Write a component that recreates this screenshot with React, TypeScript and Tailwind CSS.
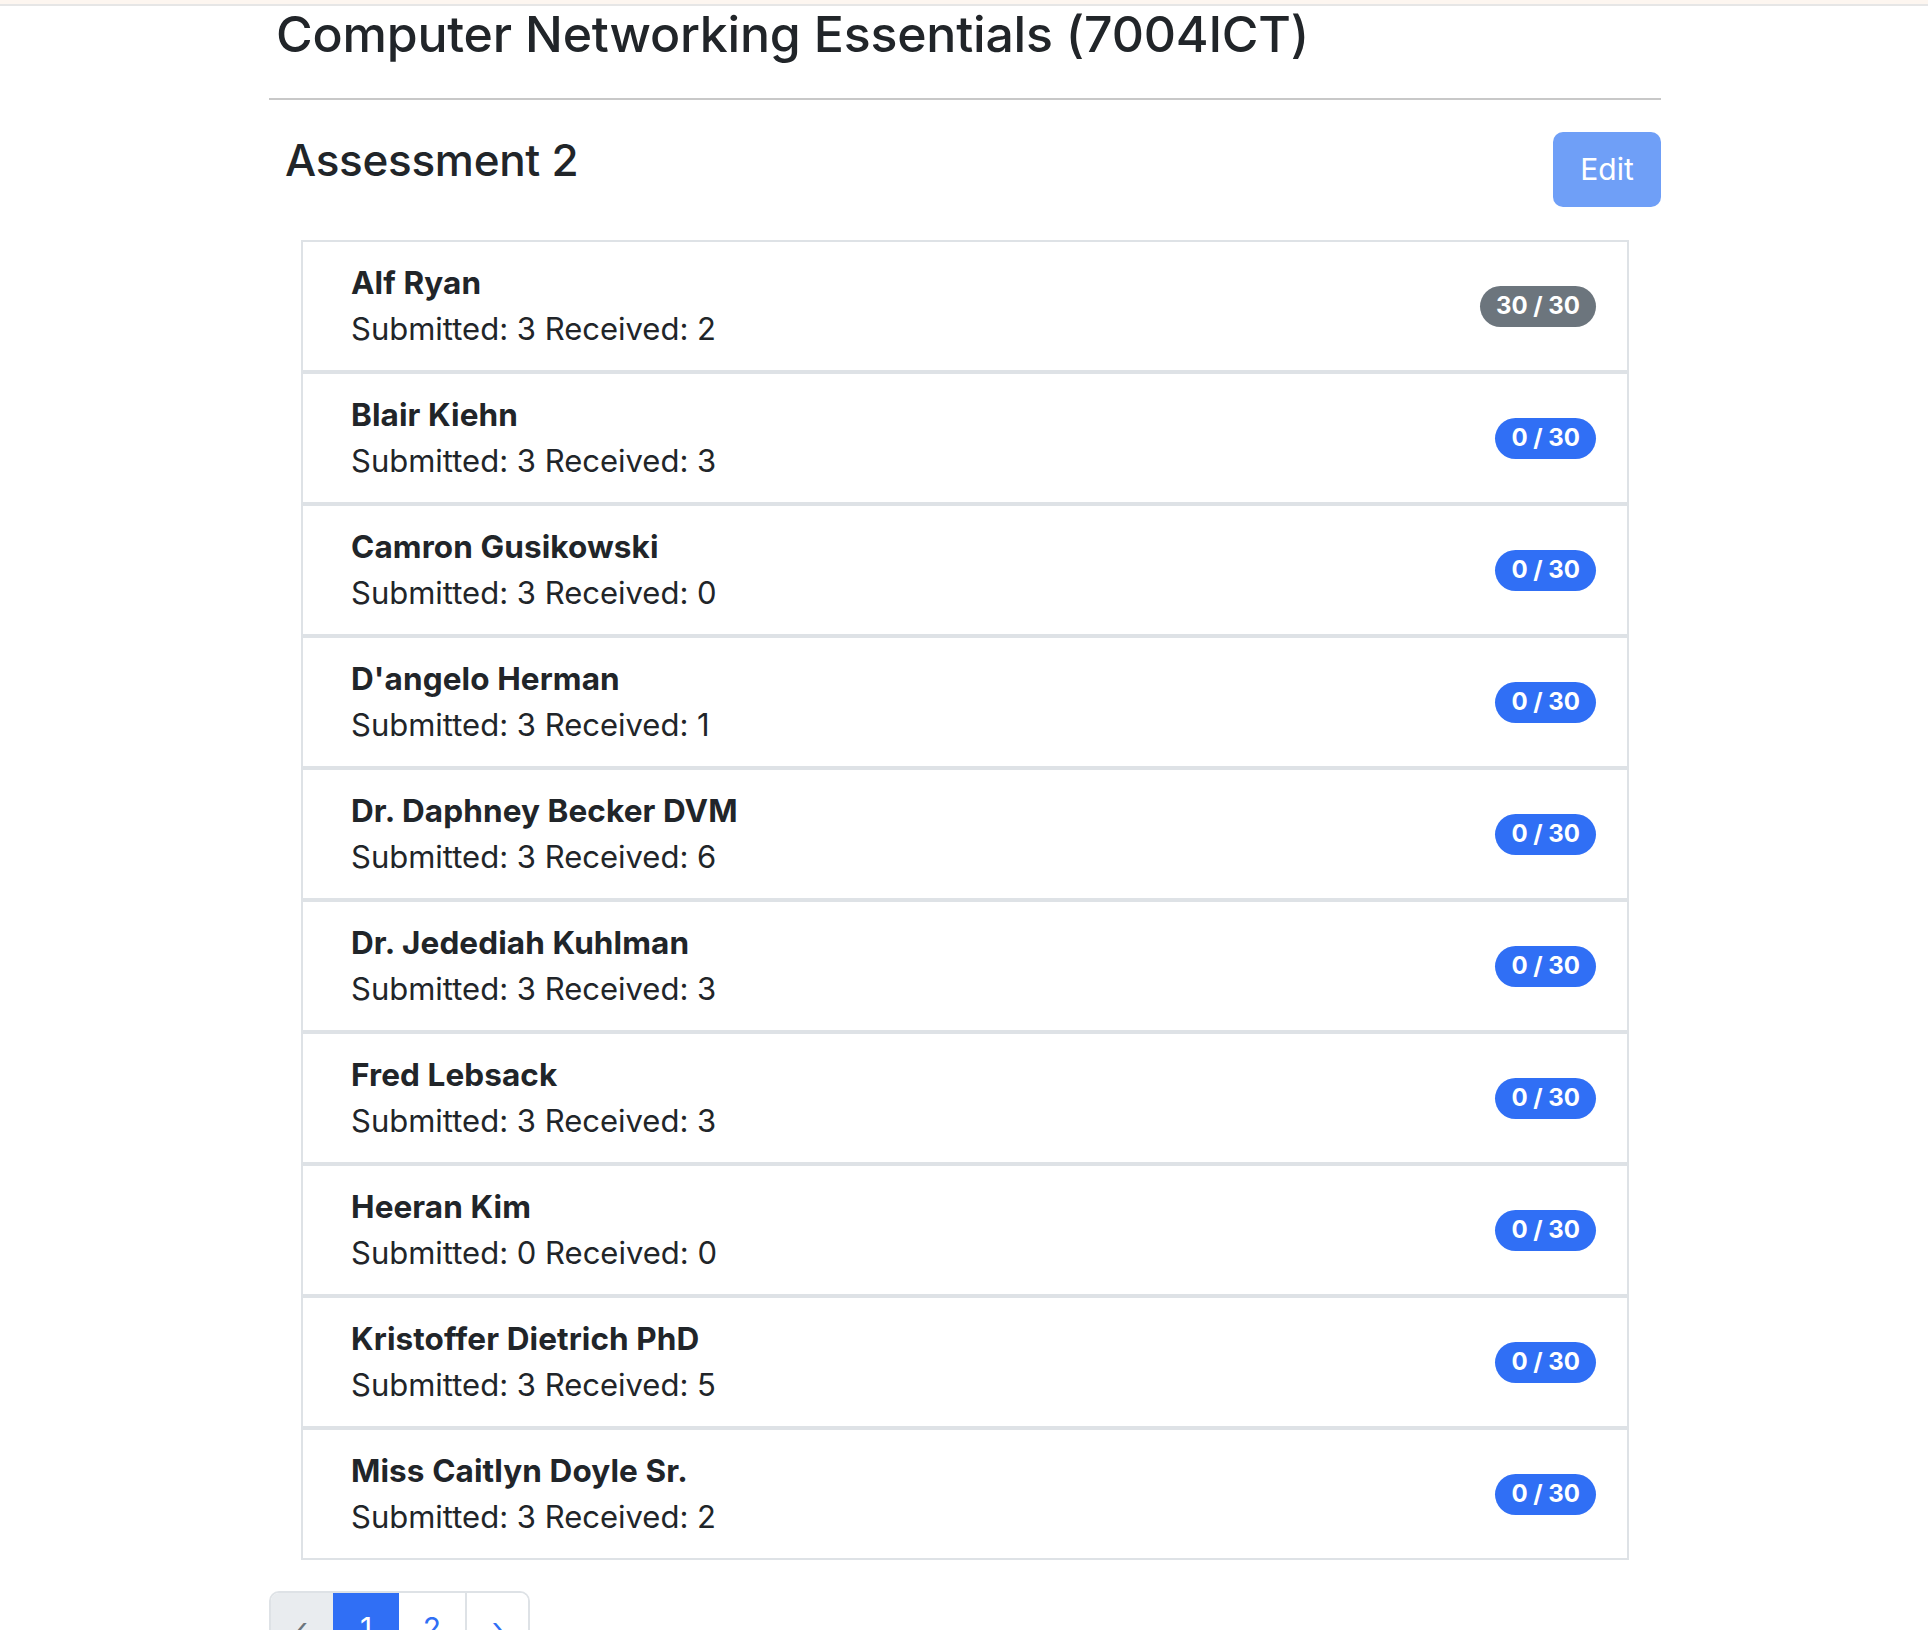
import React from 'react';

type Student = {
    name: string;
    submitted: number;
    received: number;
    score: number;
};

const STUDENTS: Student[] = [
    { name: 'Alf Ryan', submitted: 3, received: 2, score: 30 },
    { name: 'Blair Kiehn', submitted: 3, received: 3, score: 0 },
    { name: 'Camron Gusikowski', submitted: 3, received: 0, score: 0 },
    { name: "D'angelo Herman", submitted: 3, received: 1, score: 0 },
    { name: 'Dr. Daphney Becker DVM', submitted: 3, received: 6, score: 0 },
    { name: 'Dr. Jedediah Kuhlman', submitted: 3, received: 3, score: 0 },
    { name: 'Fred Lebsack', submitted: 3, received: 3, score: 0 },
    { name: 'Heeran Kim', submitted: 0, received: 0, score: 0 },
    { name: 'Kristoffer Dietrich PhD', submitted: 3, received: 5, score: 0 },
    { name: 'Miss Caitlyn Doyle Sr.', submitted: 3, received: 2, score: 0 },
];

const MAX_SCORE = 30;

const StudentRow: React.FC<{ student: Student }> = ({ student }) => {
    // full marks get the grey badge, everything else stays primary blue
    const done = student.score === MAX_SCORE;
    return (
        <li className="flex items-center justify-between border-2 border-[#dee2e6] bg-white pl-[48px] pr-[31px] pt-[17.5px] pb-[17.5px]">
            <div className="leading-[46.5px] text-[#212529]">
                <div className="text-[31.5px] font-bold tracking-[0.1px]">{student.name}</div>
                <div className="text-[31px]">
                    Submitted: {student.submitted} Received: {student.received}
                </div>
            </div>
            <span
                className={
                    'inline-flex h-[41px] items-center rounded-full px-[16px] text-[24px] font-bold leading-none text-white ' +
                    (done ? 'bg-[#6c757d]' : 'bg-[#306ff5]')
                }
            >
                {student.score} / {MAX_SCORE}
            </span>
        </li>
    );
};

const Pagination: React.FC = () => (
    <nav className="flex">
        <ul className="flex overflow-hidden rounded-[10px] border-2 border-[#dee2e6] text-[30px] leading-[1.5]">
            <li className="flex w-[62px] items-center justify-center bg-[#e9ecef] pt-[13px] pb-[14px] text-[#6c757d]">‹</li>
            <li className="flex w-[66px] items-center justify-center bg-[#306ff5] pt-[13px] pb-[14px] text-white">1</li>
            <li className="flex w-[68px] items-center justify-center border-r-2 border-[#dee2e6] bg-white pt-[13px] pb-[14px] text-[#306ff5]">2</li>
            <li className="flex w-[61px] items-center justify-center bg-white pt-[13px] pb-[14px] text-[#306ff5]">›</li>
        </ul>
    </nav>
);

export default function App() {
    return (
        <div className="min-h-screen bg-white" style={{ fontFamily: 'Inter, "Noto Sans", sans-serif' }}>
            <div className="h-[4px] bg-[#fdf6f0]" />
            <div className="h-[2px] bg-[#e6e6e6]" />

            <div className="mx-auto w-[1394px] pl-[2px]">
                <h1 className="-mt-[2px] pl-[7px] text-[50px] font-medium leading-[1.2] tracking-[-0.2px] text-[#212529]">
                    Computer Networking Essentials (7004ICT)
                </h1>
                <div className="mt-[34px] h-[2px] bg-[#c8c8c8]" />

                <div className="mt-[32px] flex items-start justify-between">
                    <h2 className="pl-[16px] pt-[2px] text-[44px] font-medium leading-[1.2] tracking-[-0.3px] text-[#212529]">Assessment 2</h2>
                    <button className="h-[75px] w-[108px] rounded-[10px] bg-[#6f9ff7] text-[30px] text-white">Edit</button>
                </div>

                <ul className="mx-[32px] mt-[33px] flex flex-col">
                    {STUDENTS.map((s) => (
                        <StudentRow key={s.name} student={s} />
                    ))}
                </ul>

                <div className="mt-[31px] pb-[40px]">
                    <Pagination />
                </div>
            </div>
        </div>
    );
}
